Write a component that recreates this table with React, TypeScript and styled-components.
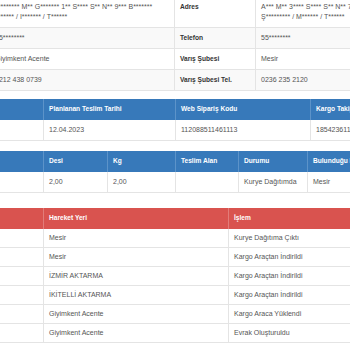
import styled, { createGlobalStyle } from "styled-components";

const GlobalStyle = createGlobalStyle`
  html, body {
    margin: 0;
    padding: 0;
    background: #fff;
  }
  body {
    font-family: "Liberation Sans", Arial, sans-serif;
    font-size: 7px;
    color: #555;
  }
`;

const Viewport = styled.div`
  width: 350px;
  height: 350px;
  overflow: hidden;
`;

const Page = styled.div`
  width: 460px;
  margin: -3px 0 0 -11px;
`;

const Section = styled.section<{ $mt: number }>`
  margin-top: ${({ $mt }) => $mt}px;
`;

const Table = styled.table`
  width: 100%;
  table-layout: fixed;
  border-collapse: collapse;
`;

const Col = styled.col<{ $w?: number }>`
  width: ${({ $w }) => ($w ? `${$w}px` : "auto")};
`;

const Row = styled.tr<{ $striped?: boolean }>`
  background: ${({ $striped }) => ($striped ? "#f9f9f9" : "#fff")};
`;

const Cell = styled.td<{ $tight?: boolean }>`
  padding: ${({ $tight }) => ($tight ? "4px 5px" : "5px 5px")};
  line-height: 10px;
  border: 1px solid #e4e4e4;
  border-top: none;
  vertical-align: top;
  white-space: nowrap;
  overflow: hidden;
  color: #555;
`;

const Label = styled(Cell).attrs({ as: "th" })`
  text-align: left;
  font-weight: bold;
  font-size: 6.6px;
  color: #333;
`;

const Head = styled.th<{ $tone: "blue" | "red" }>`
  padding: 5px 5px 6px;
  line-height: 10px;
  text-align: left;
  font-weight: bold;
  font-size: 6.6px;
  color: #fff;
  white-space: nowrap;
  overflow: hidden;
  background: ${({ $tone }) => ($tone === "blue" ? "#3779ba" : "#d9534f")};
  border-right: 1px solid
    ${({ $tone }) => ($tone === "blue" ? "#5c93c9" : "#e27c79")};
`;

const movements = [
  ["Mesir", "Kurye Dağıtıma Çıktı"],
  ["Mesir", "Kargo Araçtan İndirildi"],
  ["İZMİR AKTARMA", "Kargo Araçtan İndirildi"],
  ["İKİTELLİ AKTARMA", "Kargo Araçtan İndirildi"],
  ["Giyimkent Acente", "Kargo Araca Yüklendi"],
  ["Giyimkent Acente", "Evrak Oluşturuldu"],
];

export default function App() {
  return (
    <>
      <GlobalStyle />
      <Viewport>
        <Page>
          <Section $mt={0}>
            <Table>
              <colgroup>
                <Col $w={185} />
                <Col $w={81} />
                <Col />
              </colgroup>
              <tbody>
                <Row>
                  <Cell>
                    ********* M** G******* 1** S**** S** N** 9*** B*******
                    <br />
                    ******* / I******* / T******
                  </Cell>
                  <Label>Adres</Label>
                  <Cell>
                    A*** M** 3**** S**** S** N** 7*** B*******
                    <br />
                    Ş********* / M****** / T******
                  </Cell>
                </Row>
                <Row $striped>
                  <Cell>05********</Cell>
                  <Label>Telefon</Label>
                  <Cell>55********</Cell>
                </Row>
                <Row>
                  <Cell>Giyimkent Acente</Cell>
                  <Label>Varış Şubesi</Label>
                  <Cell>Mesir</Cell>
                </Row>
                <Row $striped>
                  <Cell>0212 438 0739</Cell>
                  <Label>Varış Şubesi Tel.</Label>
                  <Cell>0236 235 2120</Cell>
                </Row>
              </tbody>
            </Table>
          </Section>

          <Section $mt={8}>
            <Table>
              <colgroup>
                <Col $w={54} />
                <Col $w={132} />
                <Col $w={135} />
                <Col />
              </colgroup>
              <thead>
                <tr>
                  <Head $tone="blue" />
                  <Head $tone="blue">Planlanan Teslim Tarihi</Head>
                  <Head $tone="blue">Web Sipariş Kodu</Head>
                  <Head $tone="blue">Kargo Takip No</Head>
                </tr>
              </thead>
              <tbody>
                <Row>
                  <Cell />
                  <Cell>12.04.2023</Cell>
                  <Cell>112088511461113</Cell>
                  <Cell>18542361114</Cell>
                </Row>
              </tbody>
            </Table>
          </Section>

          <Section $mt={10}>
            <Table>
              <colgroup>
                <Col $w={54} />
                <Col $w={64} />
                <Col $w={68} />
                <Col $w={63} />
                <Col $w={69} />
                <Col />
              </colgroup>
              <thead>
                <tr>
                  <Head $tone="blue" />
                  <Head $tone="blue">Desi</Head>
                  <Head $tone="blue">Kg</Head>
                  <Head $tone="blue">Teslim Alan</Head>
                  <Head $tone="blue">Durumu</Head>
                  <Head $tone="blue">Bulunduğu Birim</Head>
                </tr>
              </thead>
              <tbody>
                <Row>
                  <Cell />
                  <Cell>2,00</Cell>
                  <Cell>2,00</Cell>
                  <Cell />
                  <Cell>Kurye Dağıtımda</Cell>
                  <Cell>Mesir</Cell>
                </Row>
              </tbody>
            </Table>
          </Section>

          <Section $mt={15}>
            <Table>
              <colgroup>
                <Col $w={54} />
                <Col $w={185} />
                <Col />
              </colgroup>
              <thead>
                <tr>
                  <Head $tone="red" />
                  <Head $tone="red">Hareket Yeri</Head>
                  <Head $tone="red">İşlem</Head>
                </tr>
              </thead>
              <tbody>
                {movements.map(([place, action], i) => (
                  <Row key={i}>
                    <Cell $tight />
                    <Cell $tight>{place}</Cell>
                    <Cell $tight>{action}</Cell>
                  </Row>
                ))}
              </tbody>
            </Table>
          </Section>
        </Page>
      </Viewport>
    </>
  );
}
